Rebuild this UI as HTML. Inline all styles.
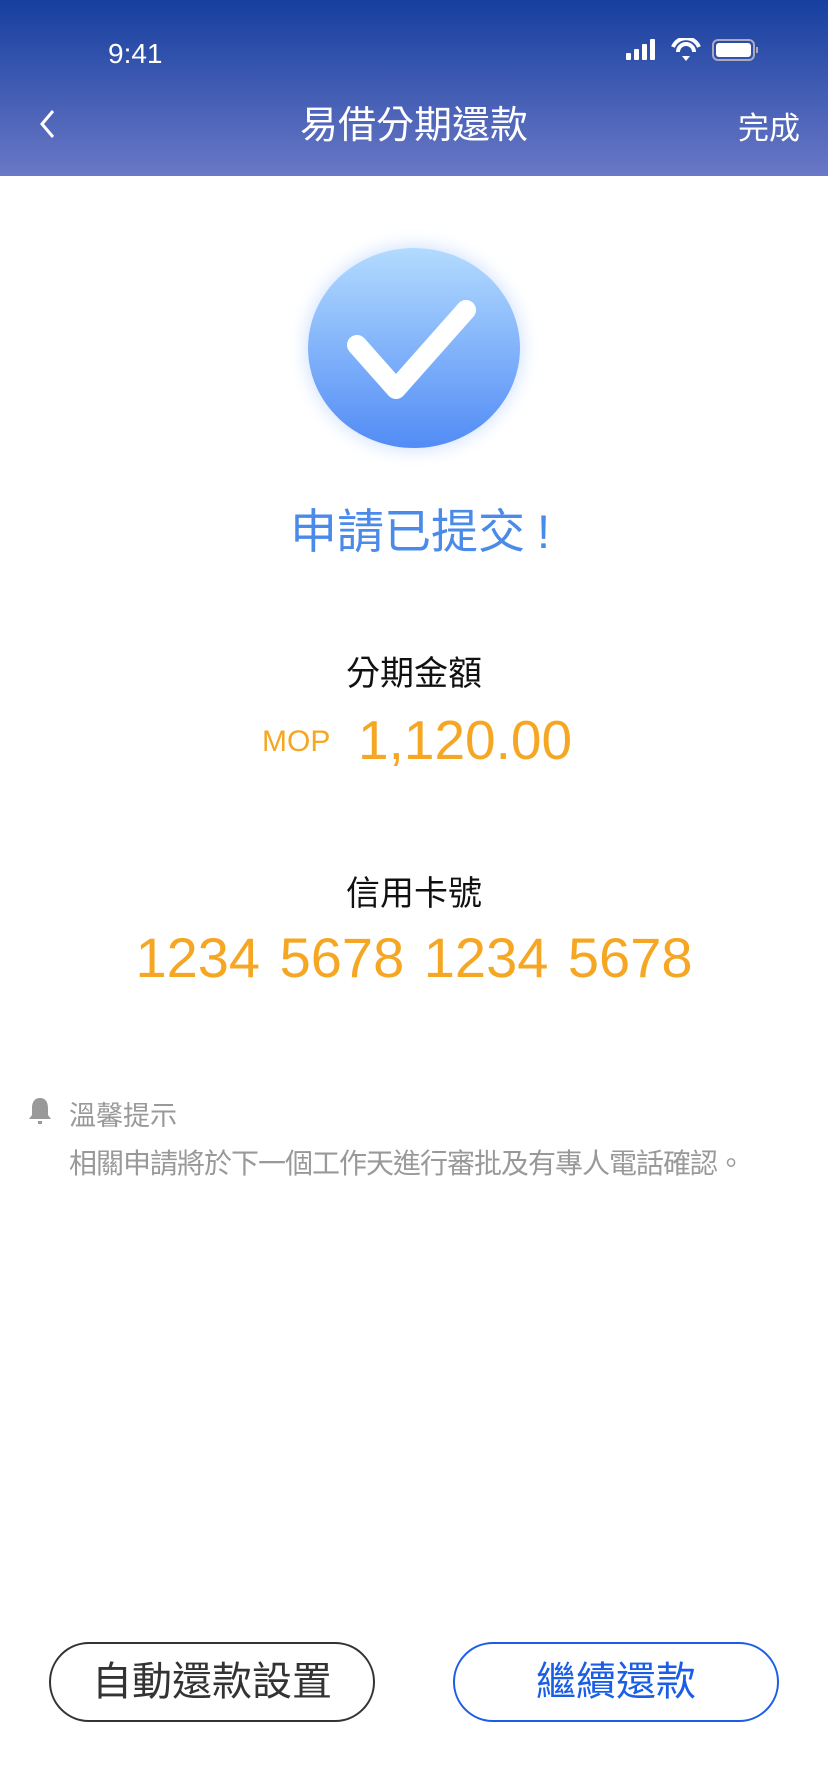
<!DOCTYPE html>
<html><head><meta charset="utf-8"><style>
*{margin:0;padding:0;box-sizing:border-box}
body{width:828px;height:1792px;background:#fff;font-family:"Liberation Sans","Noto Sans CJK TC",sans-serif;position:relative;overflow:hidden}
.hd{position:absolute;left:0;top:0;width:828px;height:176px;background:linear-gradient(#163f9f,#6a78c6)}
.abs{position:absolute}
.c{left:0;width:828px;text-align:center}
.btn{position:absolute;top:1642px;width:326px;height:80px;border-radius:40px;font-size:40px;line-height:76px;text-align:center}
</style></head><body>
<div class="hd"></div>
<div class="abs" style="left:108px;top:38px;color:#fff;font-size:28px">9:41</div>
<svg class="abs" style="left:626px;top:38px" width="136" height="26" viewBox="0 0 136 26">
<rect x="0" y="15" width="5" height="7" rx="1" fill="#fff"/><rect x="8" y="11" width="5" height="11" rx="1" fill="#fff"/><rect x="16" y="6" width="5" height="16" rx="1" fill="#fff"/><rect x="24" y="1" width="5" height="21" rx="1" fill="#fff"/>
<path d="M47 9 A14 14 0 0 1 73 9" stroke="#fff" stroke-width="4" fill="none"/><path d="M52 14 A8 8 0 0 1 68 14" stroke="#fff" stroke-width="4" fill="none"/><path d="M56 18 L60 23 L64 18 Z" fill="#fff"/>
<rect x="87" y="2" width="41" height="20" rx="5" stroke="#aab" stroke-width="2" fill="none"/><rect x="90" y="5" width="35" height="14" rx="3" fill="#fff"/><rect x="130" y="9" width="2" height="6" fill="#aab"/>
</svg>
<svg class="abs" style="left:36px;top:108px" width="22" height="32"><path d="M17 3 L6 16 L17 29" stroke="#fff" stroke-width="3" fill="none"/></svg>
<div class="abs c" style="top:94px;color:#fff;font-size:38px">易借分期還款</div>
<div class="abs" style="left:738px;top:103px;color:#fff;font-size:31px">完成</div>
<div class="abs" style="left:308px;top:248px;width:212px;height:200px;border-radius:50%;background:linear-gradient(#b3dbff,#528cf5);box-shadow:0 0 20px #c9dcff"></div>
<svg class="abs" style="left:308px;top:248px" width="212" height="200"><path d="M49 97 L88 141 L158 62" stroke="#fff" stroke-width="20" stroke-linecap="round" stroke-linejoin="round" fill="none"/></svg>
<div class="abs c" style="top:493px;left:6px;color:#4a8ae8;font-size:47px">申請已提交<span style="margin-left:12px">!</span></div>
<div class="abs c" style="top:646px;color:#111;font-size:34px">分期金額</div>
<div class="abs" style="left:262px;top:725px;color:#f5a623;font-size:30px">MOP</div>
<div class="abs" style="left:358px;top:708px;color:#f5a623;font-size:55px">1,120.00</div>
<div class="abs c" style="top:866px;color:#111;font-size:34px">信用卡號</div>
<div class="abs c" style="top:925px;color:#f5a623;font-size:56px;word-spacing:4px">1234 5678 1234 5678</div>
<svg class="abs" style="left:27px;top:1096px" width="26" height="30"><path d="M13 2 C7 2 5 7 5 12 L5 19 L2 23 L24 23 L21 19 L21 12 C21 7 19 2 13 2Z" fill="#999"/><rect x="11" y="25" width="4" height="3" fill="#999"/></svg>
<div class="abs" style="left:69px;top:1094px;color:#999;font-size:27px">溫馨提示</div>
<div class="abs" style="left:69px;top:1142px;color:#999;font-size:28px;letter-spacing:-1px;white-space:nowrap">相關申請將於下一個工作天進行審批及有專人電話確認。</div>
<div class="btn" style="left:49px;border:2px solid #333;color:#333">自動還款設置</div>
<div class="btn" style="left:453px;border:2px solid #1a5ee8;color:#1a5ee8">繼續還款</div>
</body></html>
